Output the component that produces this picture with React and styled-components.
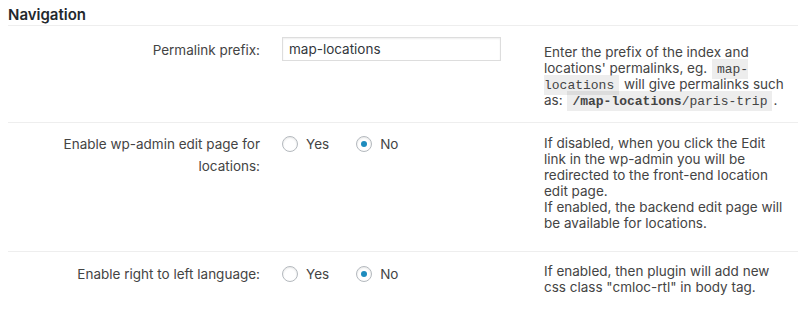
import React from 'react'
import styled, { createGlobalStyle } from 'styled-components'

const GlobalStyle = createGlobalStyle`
  body {
    margin: 0;
    background: #fff;
    font-family: Inter, "Liberation Sans", Arial, sans-serif;
    color: #444;
  }
`

const Section = styled.section`
  padding: 5px 12px 0 8px;
`

const Heading = styled.h2`
  margin: 0;
  font-size: 15px;
  line-height: 20px;
  font-weight: 600;
  color: #23282d;
`

const Row = styled.div`
  display: grid;
  grid-template-columns: 252px 240px 243px;
  column-gap: 22px;
  align-items: start;
  border-top: 1px solid #eee;
  padding: ${p => p.$pt}px 0 ${p => p.$pb}px;
`

const Label = styled.label`
  font-size: 13.5px;
  line-height: 22px;
  text-align: right;
  padding-top: ${p => p.$offset || 0}px;
`

const Field = styled.div`
  display: flex;
  align-items: center;
  gap: 27px;
  min-height: 22px;
`

const TextInput = styled.input`
  box-sizing: border-box;
  width: 219px;
  height: 24px;
  margin: 0;
  padding: 0 6px;
  border: 1px solid #ddd;
  box-shadow: inset 0 1px 2px rgba(0, 0, 0, 0.07);
  font-family: inherit;
  font-size: 13.5px;
  color: #32373c;
  outline: none;
`

const Option = styled.label`
  display: flex;
  align-items: center;
  gap: 8px;
  font-size: 13.5px;
  line-height: 22px;
`

const Radio = styled.input.attrs({ type: 'radio' })`
  appearance: none;
  box-sizing: border-box;
  width: 16px;
  height: 16px;
  margin: 0;
  border: 1px solid #b4b9be;
  border-radius: 50%;
  background: #fff;
  box-shadow: inset 0 1px 2px rgba(0, 0, 0, 0.1);
  display: grid;
  place-items: center;

  &:checked::before {
    content: '';
    width: 6px;
    height: 6px;
    border-radius: 50%;
    background: #1e8cbe;
  }
`

const Description = styled.div`
  font-size: 13.5px;
  line-height: 16px;
  padding-top: ${p => p.$offset || 0}px;
`

const Code = styled.code`
  font-family: "Liberation Mono", "Courier New", monospace;
  font-size: 13px;
  line-height: 1;
  padding: 3px 5px 2px;
  margin: 0 1px;
  background: rgba(0, 0, 0, 0.07);
`

const YesNo = ({ name }) => (
  <Field>
    <Option><Radio name={name} value="1" />Yes</Option>
    <Option><Radio name={name} value="0" defaultChecked />No</Option>
  </Field>
)

export default function App () {
  return (
    <Section>
      <GlobalStyle />
      <Heading>Navigation</Heading>

      <Row $pt={11} $pb={14}>
        <Label $offset={2}>Permalink prefix:</Label>
        <Field>
          <TextInput defaultValue="map-locations" />
        </Field>
        <Description $offset={7}>
          Enter the prefix of the index and locations' permalinks, eg. <Code>map-locations</Code> will
          give permalinks such as: <Code><b>/map-locations</b>/paris-trip</Code>.
        </Description>
      </Row>

      <Row $pt={10} $pb={20}>
        <Label>Enable wp-admin edit page for locations:</Label>
        <YesNo name="wpadmin_edit" />
        <Description $offset={2}>
          If disabled, when you click the Edit link in the wp-admin you will be redirected to the
          front-end location edit page.<br />
          If enabled, the backend edit page will be available for locations.
        </Description>
      </Row>

      <Row $pt={11} $pb={22}>
        <Label>Enable right to left language:</Label>
        <YesNo name="rtl" />
        <Description>
          If enabled, then plugin will add new css class "cmloc-rtl" in body tag.
        </Description>
      </Row>
    </Section>
  )
}
